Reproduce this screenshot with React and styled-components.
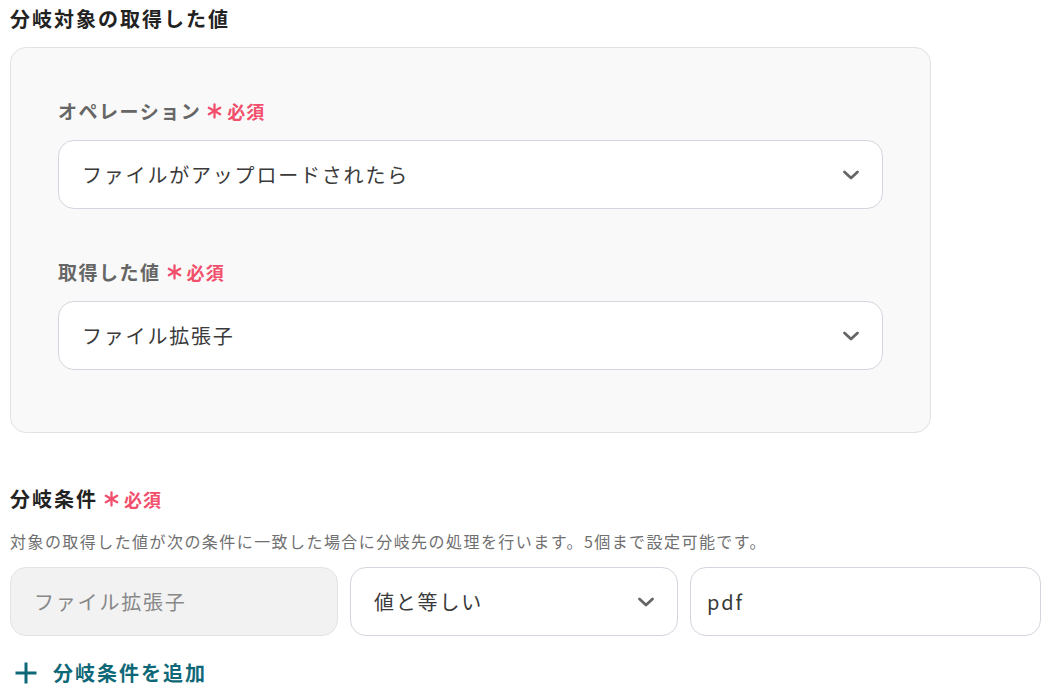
import React from "react";
import styled, { createGlobalStyle } from "styled-components";

const Global = createGlobalStyle`
  html, body { margin: 0; padding: 0; background: #fff; }
  body { font-family: "Noto Sans CJK JP", "Noto Sans", sans-serif; }
  * { box-sizing: border-box; }
`;

const Page = styled.div`
  width: 1052px;
  padding: 4px 10px 0 10px;
  display: flex;
  flex-direction: column;
`;

const SectionTitle = styled.div`
  display: flex;
  align-items: center;
  gap: 6px;
  font-size: 20px;
  font-weight: 700;
  color: #222;
  letter-spacing: 0.1em;
  line-height: 30px;
  margin-top: ${(p) => p.$mt || 0}px;
`;

const Panel = styled.div`
  width: 921px;
  margin-top: 13px;
  background: #f9f9f9;
  border: 1px solid #e2e2e2;
  border-radius: 16px;
  padding: 49px 47px 62px 47px;
  display: flex;
  flex-direction: column;
`;

const Label = styled.div`
  display: flex;
  align-items: center;
  gap: 6px;
  font-size: 19px;
  font-weight: 700;
  color: #666;
  letter-spacing: 0.08em;
  line-height: 28px;
  margin-top: ${(p) => p.$mt || 0}px;
`;

const Required = styled.span`
  display: inline-flex;
  align-items: center;
  gap: 5px;
  font-size: 18px;
  font-weight: 700;
  color: #f14f6c;
  letter-spacing: 0.06em;
`;

const Select = styled.div`
  display: flex;
  align-items: center;
  justify-content: space-between;
  height: 69px;
  margin-top: ${(p) => p.$mt || 0}px;
  width: ${(p) => p.$w || "100%"};
  padding: 0 22px 0 ${(p) => p.$pl || 23}px;
  background: ${(p) => (p.$disabled ? "#f2f2f2" : "#fff")};
  border: 1px solid ${(p) => (p.$disabled ? "#e3e3e3" : "#d3d6de")};
  border-radius: 16px;
  font-size: 20px;
  letter-spacing: 0.09em;
  color: ${(p) => (p.$disabled ? "#888" : "#3a3a3a")};
  flex-shrink: 0;
`;

const Desc = styled.div`
  margin-top: 16px;
  font-size: 16px;
  color: #707070;
  letter-spacing: 0.09em;
  line-height: 22px;
`;

const Row = styled.div`
  display: flex;
  gap: 12px;
  margin-top: 15px;
`;

const AddButton = styled.div`
  display: flex;
  align-items: center;
  gap: 16px;
  margin-top: 22px;
  padding-left: 5px;
  font-size: 20px;
  font-weight: 700;
  color: #0f6878;
  letter-spacing: 0.1em;
  line-height: 30px;
`;

const Chevron = () => (
  <svg width="18" height="12" viewBox="0 0 18 12" fill="none">
    <path d="M2.5 3 L9 9 L15.5 3" stroke="#666" strokeWidth="2.8" strokeLinecap="round" strokeLinejoin="round" />
  </svg>
);

const Asterisk = () => (
  <svg width="15" height="16" viewBox="0 0 15 16" fill="none">
    <g stroke="#f14f6c" strokeWidth="2.3" strokeLinecap="round">
      <line x1="7.5" y1="1.5" x2="7.5" y2="14.5" />
      <line x1="1.8" y1="4.8" x2="13.2" y2="11.2" />
      <line x1="1.8" y1="11.2" x2="13.2" y2="4.8" />
    </g>
  </svg>
);

const Plus = () => (
  <svg width="22" height="22" viewBox="0 0 22 22" fill="none">
    <g stroke="#0f6878" strokeWidth="3" strokeLinecap="square">
      <line x1="11" y1="2" x2="11" y2="20" />
      <line x1="2" y1="11" x2="20" y2="11" />
    </g>
  </svg>
);

const Req = () => (
  <Required>
    <Asterisk />
    必須
  </Required>
);

export default function App() {
  return (
    <>
      <Global />
      <Page>
        <SectionTitle>分岐対象の取得した値</SectionTitle>
        <Panel>
          <Label>
            オペレーション
            <Req />
          </Label>
          <Select $mt={15}>
            <span>ファイルがアップロードされたら</span>
            <Chevron />
          </Select>
          <Label $mt={49}>
            取得した値
            <Req />
          </Label>
          <Select $mt={15}>
            <span>ファイル拡張子</span>
            <Chevron />
          </Select>
        </Panel>
        <SectionTitle $mt={51}>
          分岐条件
          <Req />
        </SectionTitle>
        <Desc>対象の取得した値が次の条件に一致した場合に分岐先の処理を行います。5個まで設定可能です。</Desc>
        <Row>
          <Select $disabled $w="328px">
            <span>ファイル拡張子</span>
          </Select>
          <Select $w="328px">
            <span>値と等しい</span>
            <Chevron />
          </Select>
          <Select $w="351px" $pl={16}>
            <span>pdf</span>
          </Select>
        </Row>
        <AddButton>
          <Plus />
          分岐条件を追加
        </AddButton>
      </Page>
    </>
  );
}
